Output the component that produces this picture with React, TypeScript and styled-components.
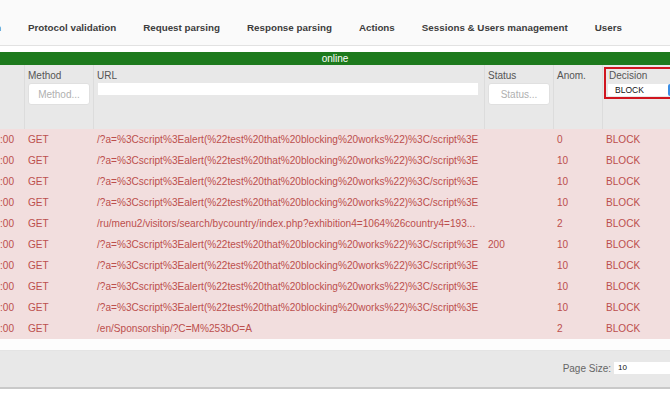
import React from "react";
import styled, { createGlobalStyle } from "styled-components";

const Global = createGlobalStyle`
  html, body { margin: 0; padding: 0; background: #ffffff; }
  body { font-family: "Liberation Sans", Arial, sans-serif; width: 670px; height: 400px; overflow: hidden; }
  * { box-sizing: border-box; }
`;

const Page = styled.div`
  width: 670px;
  height: 400px;
  overflow: hidden;
  display: flex;
  flex-direction: column;
`;

const Nav = styled.nav`
  height: 46px;
  background: #fafafa;
  border-bottom: 1px solid #e2e2e2;
  display: flex;
  align-items: center;
  gap: 27px;
  padding-top: 9px;
  white-space: nowrap;
`;

const NavItem = styled.span<{ $cut?: boolean }>`
  font-size: 9.8px;
  font-weight: bold;
  color: #3d3d3d;
  margin-left: ${(p) => (p.$cut ? "-5px" : "0")};
`;

const StatusBar = styled.div`
  margin-top: 6px;
  height: 13px;
  background: #1d7a1d;
  color: #ffffff;
  font-size: 10px;
  line-height: 13px;
  text-align: center;
`;

const COLS = "24px 69px 391px 69px 49px 1fr";

const HeaderRow = styled.div`
  display: grid;
  grid-template-columns: ${COLS};
  height: 64px;
  background: #e8e8e8;
`;

const HeadCell = styled.div<{ $first?: boolean }>`
  border-left: ${(p) => (p.$first ? "none" : "1px solid #dcdcdc")};
  padding: 5px 4px 0 3px;
  display: flex;
  flex-direction: column;
  gap: 1px;
`;

const HeadLabel = styled.span`
  font-size: 10px;
  line-height: 12px;
  color: #555555;
`;

const FilterBox = styled.div`
  width: 62px;
  height: 22px;
  background: #ffffff;
  border: 1px solid #e0e0e0;
  border-radius: 3px;
  display: flex;
  align-items: center;
  justify-content: center;
  font-size: 10px;
  color: #b0b0b0;
`;

const UrlFilter = styled.div`
  width: 380px;
  height: 12px;
  margin-left: 1px;
  background: #ffffff;
`;

const DecisionBox = styled.div`
  margin: -3px -10px 0 -2px;
  height: 32px;
  border: 2px solid #d0151f;
  padding: 1px 0 0 3px;
  display: flex;
  flex-direction: column;
  gap: 2px;
`;

const Select = styled.div`
  width: 70px;
  height: 12px;
  margin-left: -1px;
  background: #ffffff;
  display: flex;
  align-items: center;
  justify-content: space-between;
  font-size: 8.5px;
  color: #111111;
  padding-left: 7px;
`;

const SelectArrow = styled.span`
  width: 10px;
  height: 12px;
  background: #3a8ee6;
  border-radius: 2px;
`;

const Body = styled.div`
  display: flex;
  flex-direction: column;
  background: #f2dede;
`;

const Row = styled.div`
  display: grid;
  grid-template-columns: ${COLS};
  height: 21px;
  align-items: center;
  font-size: 10.1px;
  color: #bc4f4d;
  white-space: nowrap;
`;

const Cell = styled.span<{ $first?: boolean }>`
  padding-left: ${(p) => (p.$first ? "0" : "4px")};
  overflow: hidden;
`;

const Gap = styled.div`
  height: 12px;
  background: #fdfdfd;
  border-bottom: 1px solid #e4e4e4;
`;

const Footer = styled.div`
  height: 38px;
  background: #e8e8e8;
  border-bottom: 2px solid #c9c9c9;
  display: flex;
  align-items: center;
  justify-content: flex-end;
  gap: 3px;
  padding-bottom: 2px;
`;

const PageLabel = styled.span`
  font-size: 10px;
  color: #666666;
`;

const PageInput = styled.div`
  width: 56px;
  height: 12px;
  background: #ffffff;
  font-size: 8px;
  color: #111111;
  padding-left: 4px;
  line-height: 11px;
`;

const SCRIPT = "/?a=%3Cscript%3Ealert(%22test%20that%20blocking%20works%22)%3C/script%3E";

const rows = [
  { url: SCRIPT, status: "", anom: "0" },
  { url: SCRIPT, status: "", anom: "10" },
  { url: SCRIPT, status: "", anom: "10" },
  { url: SCRIPT, status: "", anom: "10" },
  { url: "/ru/menu2/visitors/search/bycountry/index.php?exhibition4=1064%26country4=193...", status: "", anom: "2" },
  { url: SCRIPT, status: "200", anom: "10" },
  { url: SCRIPT, status: "", anom: "10" },
  { url: SCRIPT, status: "", anom: "10" },
  { url: SCRIPT, status: "", anom: "10" },
  { url: "/en/Sponsorship/?C=M%253bO=A", status: "", anom: "2" },
];

const navItems = [
  "Protocol validation",
  "Request parsing",
  "Response parsing",
  "Actions",
  "Sessions & Users management",
  "Users",
];

export default function App() {
  return (
    <Page>
      <Global />
      <Nav>
        <NavItem $cut>n</NavItem>
        {navItems.map((n) => (
          <NavItem key={n}>{n}</NavItem>
        ))}
      </Nav>
      <StatusBar>online</StatusBar>
      <HeaderRow>
        <HeadCell $first />
        <HeadCell>
          <HeadLabel>Method</HeadLabel>
          <FilterBox>Method...</FilterBox>
        </HeadCell>
        <HeadCell>
          <HeadLabel>URL</HeadLabel>
          <UrlFilter />
        </HeadCell>
        <HeadCell>
          <HeadLabel>Status</HeadLabel>
          <FilterBox>Status...</FilterBox>
        </HeadCell>
        <HeadCell>
          <HeadLabel>Anom.</HeadLabel>
        </HeadCell>
        <HeadCell>
          <DecisionBox>
            <HeadLabel>Decision</HeadLabel>
            <Select>
              BLOCK
              <SelectArrow />
            </Select>
          </DecisionBox>
        </HeadCell>
      </HeaderRow>
      <Body>
        {rows.map((r, i) => (
          <Row key={i}>
            <Cell $first>:00</Cell>
            <Cell>GET</Cell>
            <Cell>{r.url}</Cell>
            <Cell>{r.status}</Cell>
            <Cell>{r.anom}</Cell>
            <Cell>BLOCK</Cell>
          </Row>
        ))}
      </Body>
      <Gap />
      <Footer>
        <PageLabel>Page Size:</PageLabel>
        <PageInput>10</PageInput>
      </Footer>
    </Page>
  );
}
